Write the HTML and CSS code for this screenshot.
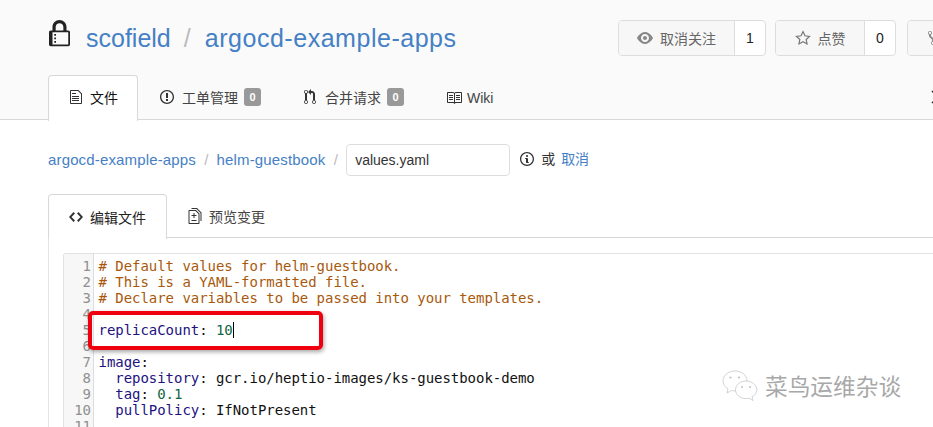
FILE: index.html
```html
<!DOCTYPE html>
<html lang="zh">
<head>
<meta charset="utf-8">
<title>values.yaml</title>
<link rel="stylesheet" href="styles.css">
</head>
<body>
<header class="repo-head">
  <div class="title-row">
    <svg class="lock" viewBox="0 0 12 16"><path d="M4 13H3v-1h1v1zm8-6v7c0 .55-.45 1-1 1H1c-.55 0-1-.45-1-1V7c0-.55.45-1 1-1h1V4c0-2.2 1.8-4 4-4s4 1.8 4 4v2h1c.55 0 1 .45 1 1zM3.8 6h4.41V4c0-1.22-.98-2.2-2.2-2.2-1.22 0-2.2.98-2.2 2.2v2H3.8zM11 7H2v7h9V7zM4 8H3v1h1V8zm0 2H3v1h1v-1z"/></svg>
    <h1 class="repo-name"><a>scofield</a><span class="slash">/</span><a class="repo-link">argocd-example-apps</a></h1>
    <div class="actions">
      <div class="btn-group">
        <span class="btn wide-watch"><svg class="ico eye" viewBox="0 0 16 16"><path d="M8.06 2C3 2 0 8 0 8s3 6 8.06 6C13 14 16 8 16 8s-3-6-7.94-6zM8 12c-2.2 0-4-1.78-4-4 0-2.2 1.8-4 4-4 2.22 0 4 1.8 4 4 0 2.22-1.78 4-4 4zm2-4c0 1.11-.89 2-2 2-1.11 0-2-.89-2-2 0-1.11.89-2 2-2 1.11 0 2 .89 2 2z"/></svg>取消关注</span>
        <span class="count">1</span>
      </div>
      <div class="btn-group">
        <span class="btn wide-star"><svg class="ico star" viewBox="0 0 16 16"><path d="M8 1.6l1.95 4.2 4.55.55-3.35 3.1.88 4.5L8 11.7l-4.03 2.25.88-4.5L1.5 6.35l4.55-.55z"/></svg>点赞</span>
        <span class="count">0</span>
      </div>
      <div class="btn-group fork">
        <span class="btn"><svg class="ico" viewBox="0 0 10 16"><path d="M8 1a1.993 1.993 0 0 0-1 3.72V6L5 8 3 6V4.72A1.993 1.993 0 0 0 2 1a1.993 1.993 0 0 0-1 3.72V6.5l3 3v1.78A1.993 1.993 0 0 0 5 15a1.993 1.993 0 0 0 1-3.72V9.5l3-3V4.72A1.993 1.993 0 0 0 8 1zM2 4.2C1.34 4.2.8 3.65.8 3c0-.65.55-1.2 1.2-1.2.65 0 1.2.55 1.2 1.2 0 .65-.55 1.2-1.2 1.2zm3 10c-.66 0-1.2-.55-1.2-1.2 0-.65.55-1.2 1.2-1.2.65 0 1.2.55 1.2 1.2 0 .65-.55 1.2-1.2 1.2zm3-10c-.66 0-1.2-.55-1.2-1.2 0-.65.55-1.2 1.2-1.2.65 0 1.2.55 1.2 1.2 0 .65-.55 1.2-1.2 1.2z"/></svg></span>
      </div>
    </div>
  </div>
  <nav class="repo-tabs">
    <a class="tab active"><svg class="ico" viewBox="0 0 12 16"><path d="M6 5H2V4h4v1zM2 8h7V7H2v1zm0 2h7V9H2v1zm0 2h7v-1H2v1zm10-7.5V14c0 .55-.45 1-1 1H1c-.55 0-1-.45-1-1V2c0-.55.45-1 1-1h7.5L12 4.5zM11 5L8 2H1v12h10V5z"/></svg>文件</a>
    <a class="tab"><svg class="ico" viewBox="0 0 14 16"><path d="M7 2.3c3.14 0 5.7 2.56 5.7 5.7s-2.56 5.7-5.7 5.7A5.71 5.71 0 0 1 1.3 8c0-3.14 2.56-5.7 5.7-5.7zM7 1C3.14 1 0 4.14 0 8s3.14 7 7 7 7-3.14 7-7-3.14-7-7-7zm1 3H6v5h2V4zm0 6H6v2h2v-2z"/></svg>工单管理<span class="badge">0</span></a>
    <a class="tab"><svg class="ico" viewBox="0 0 12 16"><path d="M11 11.28V5c-.03-.78-.34-1.47-.94-2.06C9.46 2.35 8.78 2.03 8 2H7V0L4 3l3 3V4h1c.27.02.48.11.69.31.21.2.3.42.31.69v6.28A1.993 1.993 0 0 0 10 15a1.993 1.993 0 0 0 1-3.72zm-1 2.92c-.66 0-1.2-.55-1.2-1.2 0-.65.55-1.2 1.2-1.2.65 0 1.2.55 1.2 1.2 0 .65-.55 1.2-1.2 1.2zM4 3c0-1.11-.89-2-2-2a1.993 1.993 0 0 0-1 3.72v6.56A1.993 1.993 0 0 0 2 15a1.993 1.993 0 0 0 1-3.72V4.72c.59-.34 1-.98 1-1.72zm-.8 10c0 .66-.55 1.2-1.2 1.2-.65 0-1.2-.55-1.2-1.2 0-.65.55-1.2 1.2-1.2.65 0 1.2.55 1.2 1.2zM2 4.2C1.34 4.2.8 3.65.8 3c0-.65.55-1.2 1.2-1.2.65 0 1.2.55 1.2 1.2 0 .65-.55 1.2-1.2 1.2z"/></svg>合并请求<span class="badge">0</span></a>
    <a class="tab tab-wiki"><svg class="ico" viewBox="0 0 16 16"><path d="M3 5h4v1H3V5zm0 3h4V7H3v1zm0 2h4V9H3v1zm11-5h-4v1h4V5zm0 2h-4v1h4V7zm0 2h-4v1h4V9zm2-6v9c0 .55-.45 1-1 1H9.5l-1 1-1-1H2c-.55 0-1-.45-1-1V3c0-.55.45-1 1-1h5.5l1 1 1-1H15c.55 0 1 .45 1 1zm-8 .5L7.5 3H2v9h6V3.5zm7-.5H9.5l-.5.5V12h6V3z"/></svg>Wiki</a>
    <svg class="nav-more" viewBox="0 0 8 14"><path d="M1 1l6 6-6 6" /></svg>
  </nav>
</header>

<main class="content">
  <div class="crumbs">
    <a class="crumb">argocd-example-apps</a><span class="sep">/</span><a class="crumb">helm-guestbook</a><span class="sep">/</span>
    <input class="file-name" value="values.yaml" aria-label="文件名">
    <svg class="ico info" viewBox="0 0 14 16"><path d="M6.3 5.69a.942.942 0 0 1-.28-.7c0-.28.09-.52.28-.7.19-.18.42-.28.7-.28.28 0 .52.09.7.28.18.19.28.42.28.7 0 .28-.09.52-.28.7a1 1 0 0 1-.7.3c-.28 0-.52-.11-.7-.3zM8 7.99c-.02-.25-.11-.48-.31-.69-.2-.19-.42-.3-.69-.31H6c-.27.02-.48.13-.69.31-.2.2-.3.44-.31.69h1v3c.02.27.11.5.31.69.2.2.42.31.69.31h1c.27 0 .48-.11.69-.31.2-.19.3-.42.31-.69H8V7.98v.01zM7 2.3c-3.14 0-5.7 2.54-5.7 5.68 0 3.14 2.56 5.7 5.7 5.7s5.7-2.55 5.7-5.7c0-3.15-2.56-5.69-5.7-5.69v.01zM7 .98c3.86 0 7 3.14 7 7s-3.14 7-7 7-7-3.12-7-7 3.14-7 7-7z"/></svg>
    <span class="or">或</span><a class="cancel">取消</a>
  </div>

  <nav class="edit-tabs">
    <a class="etab active"><svg class="ico" viewBox="0 0 14 16"><path d="M9.5 3L8 4.5 11.5 8 8 11.5 9.5 13 14 8 9.5 3zm-5 0L0 8l4.5 5L6 11.5 2.5 8 6 4.5 4.5 3z"/></svg>编辑文件</a>
    <a class="etab"><svg class="ico" viewBox="0 0 13 16"><path d="M6 7h2v1H6v2H5V8H3V7h2V5h1v2zm-3 6h5v-1H3v1zM7.5 2L11 5.5V15c0 .55-.45 1-1 1H1c-.55 0-1-.45-1-1V3c0-.55.45-1 1-1h6.5zM10 6L7 3H1v12h9V6zM8.5 0H3v1h5l4 4v8h1V4.5L8.5 0z"/></svg>预览变更</a>
  </nav>

  <section class="panel">
    <div class="editor">
      <div class="gutter"><span>1</span><span>2</span><span>3</span><span>4</span><span>5</span><span>6</span><span>7</span><span>8</span><span>9</span><span>10</span><span>11</span></div>
      <div class="code">
        <div class="line cm"># Default values for helm-guestbook.</div>
        <div class="line cm"># This is a YAML-formatted file.</div>
        <div class="line cm"># Declare variables to be passed into your templates.</div>
        <div class="line">&nbsp;</div>
        <div class="line"><span class="key">replicaCount</span>: <span class="num">10</span><span class="caret"></span></div>
        <div class="line">&nbsp;</div>
        <div class="line"><span class="key">image</span>:</div>
        <div class="line">  <span class="key">repository</span>: gcr.io/heptio-images/ks-guestbook-demo</div>
        <div class="line">  <span class="key">tag</span>: <span class="num">0.1</span></div>
        <div class="line">  <span class="key">pullPolicy</span>: IfNotPresent</div>
      </div>
    </div>
  </section>
</main>

<div class="highlight"></div>

<div class="watermark">
  <svg class="wechat" viewBox="0 0 36 34"><g fill="#fff" stroke="#c8c8c8" stroke-width="0.8"><path d="M13 1C6.5 1 1 5.3 1 10.8c0 3.5 2.2 6.3 5 8.2l-1 4 4.500-2.500c1.300.3 2.500.5 3.500.5 6.500 0 12-4.500 12-10.200S19.500 1 13 1z"/><path d="M24 11c-5.800 0-10.500 3.900-10.500 8.800S18.200 28.600 24 28.600c1 0 2-.1 3-.4l4 2.300-1-3.500c2.800-1.700 4.800-4.300 4.800-7.200C34.800 14.900 29.800 11 24 11z"/></g><g fill="#c0c0c0"><circle cx="8.500" cy="7.500" r="1.100"/><circle cx="17" cy="7.500" r="1.100"/><circle cx="20" cy="17" r="1"/><circle cx="28" cy="17" r="1"/></g></svg>
  <span class="wm-text">菜鸟运维杂谈</span>
</div>
</body>
</html>
```
FILE: styles.css
```css
* { box-sizing: border-box; }
html, body { margin: 0; height: 427px; overflow: hidden; background: #fff; }
body { position: relative; width: 933px; font-family: "Liberation Sans", "Noto Sans CJK SC", sans-serif; font-size: 14px; color: #333; }
a { color: #4580c5; text-decoration: none; }
svg { fill: currentColor; flex: none; }
.ico { width: 14px; height: 16px; }

.repo-head { height: 120px; padding: 20px 0 0 48px; background: #fafafa; border-bottom: 1px solid #d8d8d8; }
.title-row { display: flex; align-items: flex-start; height: 55px; }
.lock { width: 23px; height: 28px; color: #222; margin-right: 15px; }
.repo-name { margin: 1px 0 0; font-size: 25px; line-height: 34px; font-weight: 400; white-space: nowrap; }
.repo-link { letter-spacing: .53px; }
.slash { color: #bbb; margin: 0 14px 0 13px; }
.actions { display: flex; gap: 9px; position: absolute; left: 618px; top: 20px; }
.btn-group { display: flex; height: 36px; border: 1px solid #ddd; border-radius: 4px; background: #fff; overflow: hidden; }
.btn { display: flex; align-items: center; justify-content: center; padding-bottom: 1px; background: #f7f7f7; color: #666; font-size: 14px; border-right: 1px solid #ddd; }
.wide-watch { width: 116px; }
.wide-star { width: 89px; }
.btn .ico { margin-right: 7px; color: #888; width: 16px; }
.star { fill: none; stroke: #777; stroke-width: 1.2; }
.count { display: flex; align-items: center; justify-content: center; width: 30px; color: #222; font-size: 14px; }
.fork { margin-left: 2px; width: 40px; }
.fork .btn { width: 100%; border-right: 0; justify-content: flex-start; padding-left: 20px; }
.fork .ico { width: 10px; }

.repo-tabs { display: flex; align-items: flex-end; height: 45px; }
.tab { display: flex; flex: none; align-items: center; height: 45px; padding: 0 21px 1px; color: #444; font-size: 14px; white-space: nowrap; }
.tab .ico { margin-right: 8px; color: #333; }
.tab.active { width: 90px; padding: 0 0 3px 20px; margin-right: 1px; color: #111; background: #fff; border: 1px solid #d8d8d8; border-bottom: 0; border-radius: 4px 4px 0 0; margin-bottom: -1px; height: 46px; }
.tab.active .ico { margin-right: 7px; }
.tab-wiki { padding-bottom: 0; }
.tab-wiki .ico { width: 16px; margin-right: 5px; }
.badge { display: inline-block; width: 17px; height: 18px; margin-left: 6px; border-radius: 3px; background: #999; color: #fff; font-size: 11px; font-weight: 700; line-height: 18px; text-align: center; }
.nav-more { width: 8px; height: 14px; margin: 0 0 16px 417px; fill: none; stroke: #222; stroke-width: 1.4; }

.content { padding: 24px 0 0 48px; }
.crumbs { display: flex; align-items: center; height: 32px; font-size: 15px; white-space: nowrap; }
.crumb { letter-spacing: .15px; padding-bottom: 2px; }
.sep { color: #bbb; margin: 0 8.25px; padding-bottom: 2px; }
.file-name { width: 164px; height: 32px; padding: 0 8px; border: 1px solid #ddd; border-radius: 4px; font: 14px "Liberation Sans", sans-serif; color: #333; }
.info { margin: 0 0 3px 10px; color: #333; }
.or { margin-left: 7px; font-size: 14px; padding-bottom: 4px; }
.cancel { margin-left: 6px; font-size: 14px; padding-bottom: 4px; }

.edit-tabs { display: flex; margin-top: 18px; height: 44px; border-bottom: 1px solid #d8d8d8; }
.etab { display: flex; flex: none; align-items: center; height: 44px; padding: 0 21px; color: #444; font-size: 14px; white-space: nowrap; }
.etab .ico { margin-right: 7px; color: #333; }
.etab.active { width: 119px; padding: 0 0 0 20px; color: #222; background: #fff; border: 1px solid #d8d8d8; border-bottom: 0; border-radius: 4px 4px 0 0; height: 45px; }
.panel { height: 190px; padding: 15px 0 0 14px; border-left: 1px solid #e4e4e4; }
.editor { display: flex; height: 180px; border: 1px solid #e2e2e2; border-right: 0; border-bottom: 0; border-radius: 3px 0 0 0; padding-top: 4px; font: 14px/16px "DejaVu Sans Mono", monospace; letter-spacing: -.04px; }
.gutter { display: flex; flex-direction: column; width: 30px; padding-right: 2px; text-align: right; color: #8f8f8f; background: #f7f7f7; border-right: 1px solid #ddd; margin-top: -4px; padding-top: 4px; }
.gutter span { flex: none; height: 16px; }
.code { padding-left: 4.5px; color: #111; }
.line { height: 16px; white-space: pre; }
.cm { color: #a8590c; }
.key { color: #22127f; }
.num { color: #116644; }
.caret { display: inline-block; width: 1px; height: 16px; background: #000; vertical-align: top; }

.highlight { position: absolute; left: 88px; top: 311px; width: 235px; height: 39px; border: 4px solid #f0000f; border-radius: 5px; box-shadow: 1px 2px 4px rgba(0,0,0,.35); }
.watermark { position: absolute; left: 722px; top: 368px; display: flex; align-items: center; gap: 7px; color: #a8a8a8; font-size: 22.7px; line-height: 36px; }
.wm-text { padding-top: 1px; }
.wechat { width: 36px; height: 34px; }
```
